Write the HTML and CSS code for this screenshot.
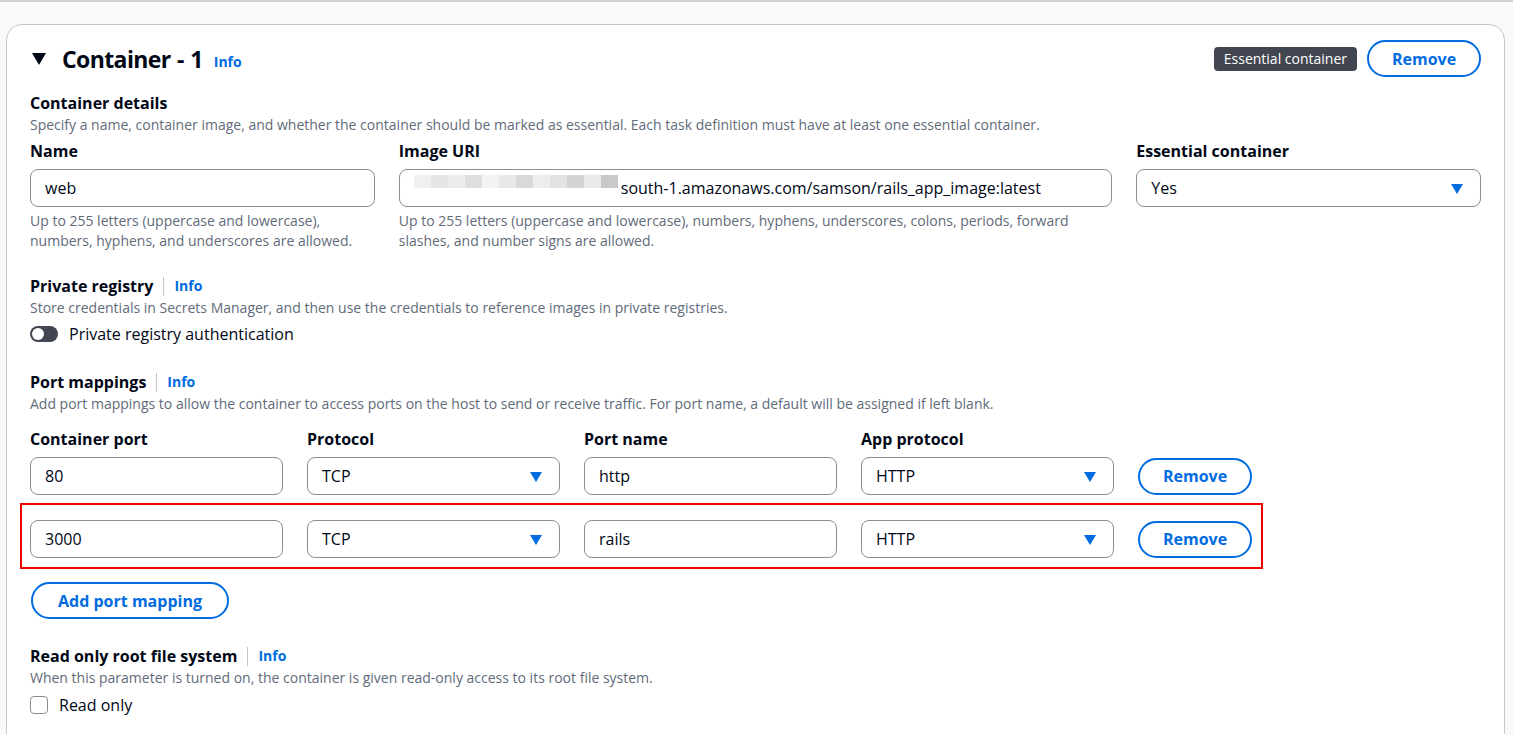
FILE: index.html
```html
<!DOCTYPE html>
<html lang="en">
<head>
<meta charset="utf-8">
<title>Container - 1</title>
<link rel="stylesheet" href="styles.css">
</head>
<body>
<div class="page">
  <section class="card">
    <header class="card-head">
      <div class="title-wrap">
        <span class="caret"></span>
        <h2 class="title">Container - 1</h2>
        <a class="info info-title">Info</a>
      </div>
      <div class="head-actions">
        <span class="badge">Essential container</span>
        <button class="btn btn-lg">Remove</button>
      </div>
    </header>

    <div class="section sec-details">
      <div class="sec-label">Container details</div>
      <div class="sec-desc">Specify a name, container image, and whether the container should be marked as essential. Each task definition must have at least one essential container.</div>
      <div class="grid4">
        <div class="field">
          <label class="flabel">Name</label>
          <div class="input">web</div>
          <div class="hint">Up to 255 letters (uppercase and lowercase), numbers, hyphens, and underscores are allowed.</div>
        </div>
        <div class="field span2">
          <label class="flabel">Image URI</label>
          <div class="input uri"><span class="blur"><i class="b1"></i><i class="b2"></i><i class="b3"></i><i class="b4"></i><i class="b5"></i><i class="b6"></i><i class="b7"></i><i class="b8"></i><i class="b9"></i><i class="b10"></i><i class="b11"></i><i class="b12"></i></span>south-1.amazonaws.com/samson/rails_app_image:latest</div>
          <div class="hint">Up to 255 letters (uppercase and lowercase), numbers, hyphens, underscores, colons, periods, forward slashes, and number signs are allowed.</div>
        </div>
        <div class="field">
          <label class="flabel">Essential container</label>
          <div class="input select">Yes<span class="arrow"></span></div>
        </div>
      </div>
    </div>

    <div class="section sec-private">
      <div class="sec-label">Private registry<span class="sep"></span><a class="info">Info</a></div>
      <div class="sec-desc">Store credentials in Secrets Manager, and then use the credentials to reference images in private registries.</div>
      <div class="toggle-row"><span class="toggle"><span class="knob"></span></span>Private registry authentication</div>
    </div>

    <div class="section sec-ports">
      <div class="sec-label">Port mappings<span class="sep"></span><a class="info">Info</a></div>
      <div class="sec-desc">Add port mappings to allow the container to access ports on the host to send or receive traffic. For port name, a default will be assigned if left blank.</div>
      <div class="ports">
        <div class="port-head">
          <span class="flabel">Container port</span>
          <span class="flabel">Protocol</span>
          <span class="flabel">Port name</span>
          <span class="flabel">App protocol</span>
        </div>
        <div class="port-row">
          <div class="input">80</div>
          <div class="input select">TCP<span class="arrow"></span></div>
          <div class="input">http</div>
          <div class="input select">HTTP<span class="arrow"></span></div>
          <button class="btn">Remove</button>
        </div>
        <div class="port-row highlighted">
          <div class="input">3000</div>
          <div class="input select">TCP<span class="arrow"></span></div>
          <div class="input">rails</div>
          <div class="input select">HTTP<span class="arrow"></span></div>
          <button class="btn">Remove</button>
        </div>
      </div>
      <button class="btn btn-add">Add port mapping</button>
    </div>

    <div class="section sec-readonly">
      <div class="sec-label">Read only root file system<span class="sep"></span><a class="info">Info</a></div>
      <div class="sec-desc">When this parameter is turned on, the container is given read-only access to its root file system.</div>
      <label class="check-row"><span class="checkbox"></span>Read only</label>
    </div>
  </section>
</div>
</body>
</html>
```

FILE: styles.css
```css
* { box-sizing: border-box; }
html, body { margin: 0; padding: 0; }
body {
  background: #f9f9fa;
  font-family: "Open Sans", "Noto Sans", Roboto, sans-serif;
  color: #000716;
  border-top: 2px solid #d1d1d6;
  height: 734px;
  overflow: hidden;
}
.page { padding: 22px 8px 0 6px; }
.card {
  background: #fff;
  border: 1px solid #c6c6cd;
  border-radius: 16px;
  padding: 15px 23px 40px 23px;
  min-height: 760px;
}
.card-head {
  display: flex;
  justify-content: space-between;
  align-items: center;
  height: 37px;
}
.title-wrap { display: flex; align-items: center; }
.caret {
  width: 0; height: 0;
  border-left: 7px solid transparent;
  border-right: 7px solid transparent;
  border-top: 12px solid #000716;
  margin: 1px 16px 0 2px;
}
.title {
  margin: 0;
  font-size: 23px;
  font-weight: 700;
  line-height: 30px;
  letter-spacing: -0.6px;
  word-spacing: 1px;
}
.info {
  color: #006ce0;
  font-size: 14px;
  font-weight: 700;
  cursor: pointer;
}
.info-title { margin: 5px 0 0 11px; }
.head-actions { display: flex; align-items: center; gap: 10px; }
.badge {
  background: #424650;
  color: #fff;
  font-size: 14px;
  border-radius: 4px;
  padding: 3px 10px;
  line-height: 18px;
}
.btn {
  background: #fff;
  border: 2px solid #006ce0;
  color: #006ce0;
  font-family: inherit;
  font-weight: 700;
  font-size: 16px;
  border-radius: 20px;
  height: 37px;
  width: 114px;
  padding: 0;
  cursor: pointer;
}
.sec-details { margin-top: 15px; }
.sec-label {
  font-size: 16px;
  font-weight: 700;
  line-height: 22px;
  display: flex;
  align-items: center;
}
.sep {
  display: inline-block;
  width: 1px;
  height: 19px;
  background: #c6c6cd;
  margin: 0 10px;
}
.sec-desc {
  font-size: 14px;
  color: #5f6b7a;
  line-height: 20px;
  margin-top: 1px;
}
.grid4 {
  display: grid;
  grid-template-columns: repeat(4, minmax(0, 1fr));
  column-gap: 24px;
  margin-top: 6px;
}
.span2 { grid-column: span 2; }
.flabel {
  display: block;
  font-size: 16px;
  font-weight: 700;
  line-height: 20px;
  margin-bottom: 8px;
}
.input {
  height: 38px;
  border: 1px solid #8c8c94;
  border-radius: 8px;
  padding: 0 14px;
  font-size: 16px;
  line-height: 36px;
  background: #fff;
  position: relative;
  white-space: nowrap;
  overflow: hidden;
}
.hint {
  font-size: 14px;
  color: #5f6b7a;
  line-height: 20px;
  margin-top: 4px;
}
.select .arrow {
  position: absolute;
  right: 17px;
  top: 14px;
  width: 0; height: 0;
  border-left: 6px solid transparent;
  border-right: 6px solid transparent;
  border-top: 10px solid #006ce0;
}
.uri { display: flex; align-items: center; }
.blur {
  display: inline-flex;
  width: 207px;
  height: 26px;
  flex-wrap: wrap;
}
.blur i { display: block; width: 17px; height: 13px; }
.b1 { background: #f0f0f0; } .b2 { background: #e6e6e6; } .b3 { background: #ececec; } .b4 { background: #dedede; }
.b5 { background: #f3f3f3; } .b6 { background: #e8e8e8; } .b7 { background: #d9d9d9; } .b8 { background: #ededed; }
.b9 { background: #e3e3e3; } .b10 { background: #d4d4d4; } .b11 { background: #eaeaea; } .b12 { background: #c9c9c9; }
.sec-private { margin-top: 24px; }
.toggle-row {
  display: flex;
  align-items: center;
  font-size: 16px;
  margin-top: 6px;
  line-height: 20px;
}
.toggle {
  width: 28px;
  height: 16px;
  border-radius: 8px;
  background: #424650;
  position: relative;
  margin-right: 11px;
}
.knob {
  position: absolute;
  left: 2px; top: 2px;
  width: 12px; height: 12px;
  border-radius: 50%;
  background: #fff;
}
.sec-ports { margin-top: 27px; }
.ports { width: max-content; }
.port-head, .port-row {
  display: grid;
  grid-template-columns: repeat(4, 253px) 114px;
  column-gap: 24px;
}
.port-head { margin-top: 15px; }
.port-row { align-items: center; }
.port-row + .port-row { margin-top: 25px; }
.highlighted { position: relative; }
.highlighted::after {
  content: "";
  position: absolute;
  left: -10px;
  right: -11px;
  top: -17px;
  bottom: -11px;
  border: 2px solid #f00000;
  pointer-events: none;
}
.btn-add {
  width: 198px;
  margin-top: 24px;
  margin-left: 1px;
}
.sec-readonly { margin-top: 26px; }
.check-row {
  display: flex;
  align-items: center;
  font-size: 16px;
  margin-top: 7px;
  line-height: 20px;
}
.checkbox {
  width: 18px; height: 18px;
  border: 1px solid #8c8c94;
  border-radius: 4px;
  margin-right: 11px;
}
```
